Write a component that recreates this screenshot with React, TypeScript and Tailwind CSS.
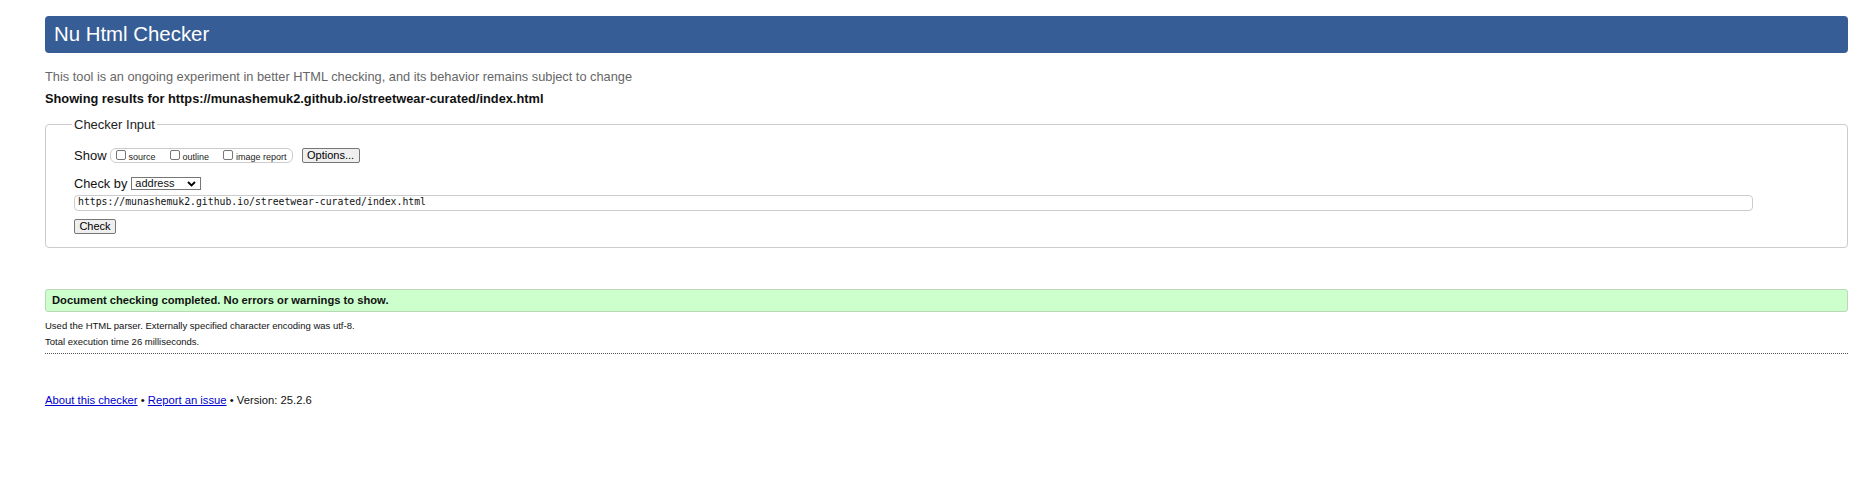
import React from "react";

function Checkbox({ label }: { label: string }) {
  return (
    <label className="flex items-center mr-[14px] last:mr-0">
      <span className="w-[10px] h-[10px] border border-[#767676] rounded-[2px] bg-white mb-[2px]" />
      <span className="ml-[3px] text-[9px] leading-[10px] mt-[2px] text-[#222]">{label}</span>
    </label>
  );
}

export default function App() {
  return (
    <div
      className="min-h-[495px] bg-white pl-[45px] pr-[17px] pt-[16px] text-[#111]"
      style={{ fontFamily: '"Liberation Sans", Arial, sans-serif' }}
    >
      <h1 className="h-[37px] bg-[#365d95] rounded-[4px] text-white text-[20.4px] leading-[37px] pl-[9px]">
        Nu Html Checker
      </h1>

      <p className="mt-[16px] text-[12.8px] leading-[16px] text-[#666]">
        This tool is an ongoing experiment in better HTML checking, and its behavior remains subject to change
      </p>
      <p className="mt-[6px] text-[12.8px] leading-[16px] font-bold text-[#111]">
        Showing results for https://munashemuk2.github.io/streetwear-curated/index.html
      </p>

      <fieldset className="mt-[8px] border border-[#ccc] rounded-[4px] pl-[28px] pr-[10px] h-[133px]">
        <legend className="text-[13px] text-[#222] px-[2px] -ml-[2px]">Checker Input</legend>

        <div className="flex items-center mt-[13px] h-[16px]">
          <span className="text-[13px] text-[#111] mr-[3px]">Show</span>
          <div className="flex items-center h-[15px] border border-[#ccc] rounded-[6px] pl-[5px] pr-[5px]">
            <Checkbox label="source" />
            <Checkbox label="outline" />
            <Checkbox label="image report" />
          </div>
          <button className="ml-[9px] h-[15px] w-[58px] text-[11px] leading-[13px] border border-[#767676] bg-[#efefef] rounded-[2px] text-black">
            Options...
          </button>
        </div>

        <div className="flex items-center mt-[12px] h-[16px]">
          <span className="text-[12.8px] text-[#111] mr-[4px]">Check by</span>
          <div className="flex items-center justify-between w-[70px] h-[13px] border border-[#767676] pl-[3px] pr-[4px] text-[11px] leading-[11px] bg-white">
            <span>address</span>
            <svg width="9" height="6" viewBox="0 0 9 6">
              <path d="M1 1 L4.5 4.5 L8 1" fill="none" stroke="#000" strokeWidth="1.8" />
            </svg>
          </div>
        </div>

        <div className="mt-[3px] mr-[84px] h-[16px] border border-[#ccc] rounded-[4px] flex items-center px-[3px]">
          <span
            className="text-[9.8px] text-[#111]"
            style={{ fontFamily: '"DejaVu Sans Mono", "Liberation Mono", monospace' }}
          >
            https://munashemuk2.github.io/streetwear-curated/index.html
          </span>
        </div>

        <button className="mt-[8px] h-[15px] w-[42px] text-[11px] leading-[13px] border border-[#767676] bg-[#efefef] rounded-[2px] text-black">
          Check
        </button>
      </fieldset>

      <div className="mt-[41px] h-[23px] bg-[#ccffcc] border border-[#b8d8b8] rounded-[3px] flex items-center pl-[6px]">
        <span className="text-[11.2px] font-bold text-[#111]">
          Document checking completed. No errors or warnings to show.
        </span>
      </div>

      <p className="mt-[6px] text-[9.5px] leading-[16px] text-[#111]">
        Used the HTML parser. Externally specified character encoding was utf-8.
      </p>
      <p className="text-[9.5px] leading-[16px] text-[#111]">Total execution time 26 milliseconds.</p>
      <div className="mt-[3px] border-t border-dotted border-[#555]" />

      <p className="mt-[38px] text-[11.25px] text-[#111]">
        <a className="text-[#00c] underline">About this checker</a>
        {" • "}
        <a className="text-[#00c] underline">Report an issue</a>
        {" • Version: 25.2.6"}
      </p>
    </div>
  );
}
